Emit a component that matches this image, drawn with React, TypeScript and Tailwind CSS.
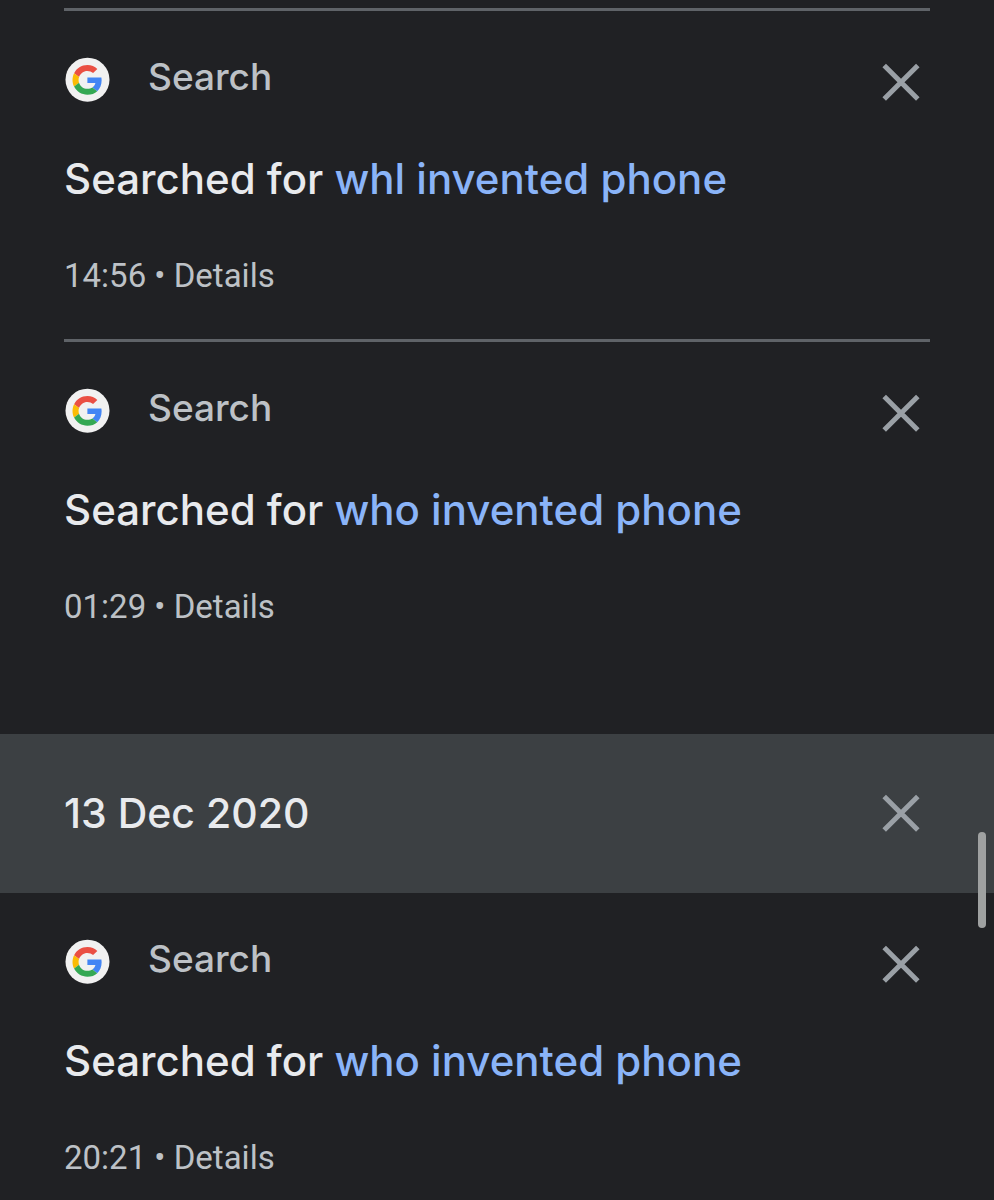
import { FunctionComponent } from "react";

type Activity = {
  id: number;
  query: string;
  time: string;
};

const recent: Activity[] = [
  { id: 1, query: "whl invented phone", time: "14:56" },
  { id: 2, query: "who invented phone", time: "01:29" },
];

const december: Activity[] = [
  { id: 3, query: "who invented phone", time: "20:21" },
];

const GoogleLogo: FunctionComponent = () => (
  <svg className="w-[46px] h-[46px] shrink-0" viewBox="-1 -1 46 46" aria-hidden="true">
    <circle cx="22.5" cy="21.7" r="22" fill="#f1f1f1" />
    <g transform="translate(7.5 7) scale(0.62)">
      <path fill="#ea4f43" d="M24 9.5c3.54 0 6.71 1.22 9.21 3.6l6.85-6.85C35.9 2.38 30.47 0 24 0 14.62 0 6.51 5.38 2.56 13.22l7.98 6.19C12.43 13.72 17.74 9.5 24 9.5z" />
      <path fill="#4285f4" d="M46.98 24.55c0-1.57-.15-3.09-.38-4.55H24v9.02h12.94c-.58 2.96-2.26 5.48-4.78 7.18l7.73 6c4.51-4.18 7.09-10.36 7.09-17.65z" />
      <path fill="#fbbc05" d="M10.53 28.59c-.48-1.45-.76-2.99-.76-4.59s.27-3.14.76-4.59l-7.98-6.19C.92 16.46 0 20.12 0 24s.92 7.54 2.56 10.78l7.97-6.19z" />
      <path fill="#34a853" d="M24 48c6.48 0 11.93-2.13 15.89-5.81l-7.73-6c-2.15 1.45-4.92 2.3-8.16 2.3-6.26 0-11.57-4.22-13.47-9.91l-7.98 6.19C6.51 42.62 14.62 48 24 48z" />
    </g>
  </svg>
);

const DeleteButton: FunctionComponent<{ label: string }> = ({ label }) => (
  <button type="button" aria-label={label} className="flex items-center justify-center w-[58px] h-[58px] shrink-0 text-[#9aa0a6]">
    <svg className="w-[38px] h-[38px]" viewBox="0 0 38 38" fill="none" stroke="currentColor" strokeWidth="5" aria-hidden="true">
      <path d="M2.2 2.4l33.6 33.6M35.8 2.4l-33.6 33.6" />
    </svg>
  </button>
);

const ActivityItem: FunctionComponent<{ item: Activity }> = ({ item }) => (
  <li className="pt-[42px] pb-[43px]">
    <div className="flex items-start justify-between">
      <div className="flex items-start gap-[38px] pt-1">
        <GoogleLogo />
        <span className="text-[37px] leading-10 font-medium text-[#bdc1c6]">Search</span>
      </div>
      <DeleteButton label={`Delete ${item.query}`} />
    </div>
    <h3 className="mt-10 text-[42px] leading-[56px] font-medium text-[#e8eaed]">
      Searched for <a href="#search" className="text-[#8ab4f8]">{item.query}</a>
    </h3>
    <p className="mt-[49px] text-[33px] leading-10 font-[Roboto,sans-serif] text-[#bdc1c6]">
      {item.time} • <a href="#details">Details</a>
    </p>
  </li>
);

const App: FunctionComponent = () => {
  return (
    <main className="relative min-h-screen pt-2 bg-[#202124] font-[Inter,sans-serif]">
      <ul className="px-16 pb-16 [&>li]:border-t-3 [&>li]:border-[#5f6368]">
        {recent.map((item) => (
          <ActivityItem key={item.id} item={item} />
        ))}
      </ul>
      <div className="flex items-center justify-between px-16 pt-[50px] pb-[51px] bg-[#3c4043]">
        <h2 className="text-[41px] leading-[56px] font-medium text-[#e8eaed]">13 Dec 2020</h2>
        <DeleteButton label="Delete 13 Dec 2020" />
      </div>
      <ul className="px-16 [&>li]:pb-0">
        {december.map((item) => (
          <ActivityItem key={item.id} item={item} />
        ))}
      </ul>
      <div className="absolute top-[832px] right-2 w-2 h-24 rounded-full bg-[#9fa1a1]" />
    </main>
  );
};

export default App;
